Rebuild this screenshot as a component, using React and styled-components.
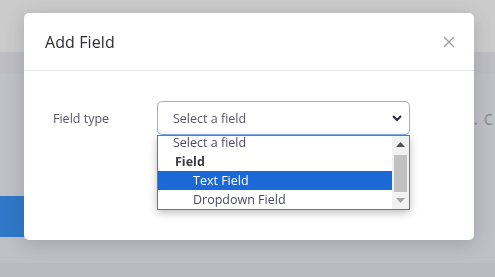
import React from "react";
import styled, { createGlobalStyle } from "styled-components";

const Global = createGlobalStyle`
  html, body { margin: 0; padding: 0; }
  body { font-family: "Open Sans", "Liberation Sans", sans-serif; overflow: hidden; }
`;

const Page = styled.div`
  width: 495px;
  height: 277px;
  background: #bfbfc6;
  display: flex;
  flex-direction: column;
`;

const TopBar = styled.div`
  height: 52px;
  background: #cbcbcb;
  flex: none;
`;

const SubBar = styled.div`
  height: 21px;
  background: #bdbdc3;
  flex: none;
`;

const Main = styled.div`
  flex: 1;
  display: flex;
  flex-direction: column;
`;

const HeadingRow = styled.div`
  display: flex;
  justify-content: flex-end;
  margin-top: 34px;
  height: 22px;
  padding-right: 2px;
`;

const FadedHeading = styled.span`
  font-size: 20px;
  line-height: 22px;
  color: #8f8f99;
  white-space: nowrap;
`;

const GhostButton = styled.div`
  margin-top: 67px;
  width: 120px;
  height: 41px;
  background: #2f78c8;
  border-radius: 0 4px 4px 0;
`;

const Footer = styled.div`
  margin-top: auto;
  height: 14px;
  background: #babac1;
`;

const Overlay = styled.div`
  position: fixed;
  inset: 0;
  display: flex;
  align-items: flex-start;
  padding: 13px 0 0 24px;
`;

const Modal = styled.div`
  width: 450px;
  height: 227px;
  background: #fff;
  border-radius: 5px;
  box-shadow: 0 4px 18px rgba(60, 60, 80, 0.22);
  display: flex;
  flex-direction: column;
`;

const Header = styled.div`
  height: 58px;
  border-bottom: 1px solid #e8e8ec;
  display: flex;
  align-items: center;
  justify-content: space-between;
  padding: 0 19px 0 21px;
  box-sizing: border-box;
`;

const Title = styled.h5`
  margin: 0;
  font-size: 16px;
  font-weight: 400;
  color: #2b2b3a;
  letter-spacing: 0.1px;
`;

const Close = styled.button`
  border: 0;
  background: none;
  padding: 0;
  width: 12px;
  height: 12px;
  display: flex;
  cursor: pointer;
`;

const Body = styled.div`
  padding: 30px 0 0 29px;
`;

const FormRow = styled.div`
  display: flex;
  align-items: center;
`;

const Label = styled.label`
  width: 104px;
  font-size: 12.5px;
  color: #555566;
`;

const SelectWrap = styled.div`
  position: relative;
  width: 253px;
`;

const SelectBox = styled.div`
  height: 34px;
  box-sizing: border-box;
  border: 1px solid #86b4f0;
  border-radius: 5px;
  display: flex;
  align-items: center;
  justify-content: space-between;
  padding: 0 6px 0 15px;
  font-size: 12.5px;
  color: #555566;
`;

const ListBox = styled.div`
  position: absolute;
  top: 34px;
  left: 0;
  width: 253px;
  height: 75px;
  box-sizing: border-box;
  border: 1px solid #767676;
  background: #fff;
  box-shadow: 0 3px 8px rgba(0, 0, 0, 0.25);
  display: flex;
  overflow: hidden;
`;

const Options = styled.div`
  flex: 1;
  margin-top: -3px;
`;

const Option = styled.div`
  height: 19px;
  line-height: 19px;
  font-size: 12.5px;
  padding-left: ${(p) => p.$indent}px;
  font-weight: ${(p) => (p.$group ? 700 : 400)};
  color: ${(p) => (p.$selected ? "#fff" : p.$group ? "#3a3a48" : "#4a4a66")};
  background: ${(p) => (p.$selected ? "#1a69d6" : "transparent")};
  white-space: nowrap;
`;

const Scrollbar = styled.div`
  width: 17px;
  background: #f1f1f1;
  display: flex;
  flex-direction: column;
  align-items: center;
`;

const Arrow = styled.div`
  height: 17px;
  display: flex;
  align-items: center;
  justify-content: center;
  margin-top: ${(p) => (p.$end ? "auto" : "0")};
`;

const Thumb = styled.div`
  width: 13px;
  height: 37px;
  background: #c1c1c1;
  margin-top: 2px;
`;

const Tri = ({ up, color }) => (
  <svg width="9" height="5" viewBox="0 0 9 5">
    <path d={up ? "M0 5 L4.5 0 L9 5 Z" : "M0 0 L4.5 5 L9 0 Z"} fill={color} />
  </svg>
);

export default function App() {
  return (
    <>
      <Global />
      <Page>
        <TopBar />
        <SubBar />
        <Main>
          <HeadingRow>
            <FadedHeading>s. c</FadedHeading>
          </HeadingRow>
          <GhostButton />
          <Footer />
        </Main>
      </Page>
      <Overlay>
        <Modal>
          <Header>
            <Title>Add Field</Title>
            <Close aria-label="Close">
              <svg width="12" height="12" viewBox="0 0 12 12">
                <path d="M1 1 L11 11 M11 1 L1 11" stroke="#9a9aa4" strokeWidth="1.3" />
              </svg>
            </Close>
          </Header>
          <Body>
            <FormRow>
              <Label>Field type</Label>
              <SelectWrap>
                <SelectBox>
                  <span>Select a field</span>
                  <svg width="12" height="8" viewBox="0 0 12 8">
                    <path d="M2 2 L6 6 L10 2" stroke="#2b2b3a" strokeWidth="2" fill="none" />
                  </svg>
                </SelectBox>
                <ListBox>
                  <Options>
                    <Option $indent={15}>Select a field</Option>
                    <Option $indent={17} $group>Field</Option>
                    <Option $indent={35} $selected>Text Field</Option>
                    <Option $indent={35}>Dropdown Field</Option>
                  </Options>
                  <Scrollbar>
                    <Arrow><Tri up color="#505050" /></Arrow>
                    <Thumb />
                    <Arrow $end><Tri color="#a3a3a3" /></Arrow>
                  </Scrollbar>
                </ListBox>
              </SelectWrap>
            </FormRow>
          </Body>
        </Modal>
      </Overlay>
    </>
  );
}
